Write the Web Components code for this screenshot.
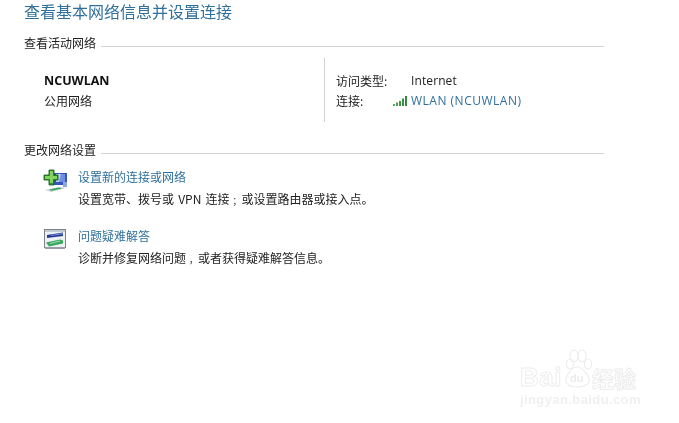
<!DOCTYPE html>
<html lang="zh">
<head>
<meta charset="utf-8">
<title>网络和共享中心</title>
<style>
  html, body { margin: 0; background: #fff; }
  body { width: 679px; height: 423px; overflow: hidden; position: relative; font-family: "Noto Sans CJK SC", "Liberation Sans", sans-serif; }
  net-section.second { margin-top: 19px; }
</style>
</head>
<body>
<net-page>
  <span slot="heading">查看基本网络信息并设置连接</span>
  <net-section label="查看活动网络">
    <active-network></active-network>
  </net-section>
  <net-section label="更改网络设置" class="second">
    <net-task href-text="设置新的连接或网络" desc="设置宽带、拨号或 VPN 连接<span class='mid'>；</span>或设置路由器或接入点。">
      <svg slot="icon" width="26" height="24" viewBox="0 0 26 24">
        <rect x="11" y="4" width="13" height="12" fill="#3556bd"/>
        <rect x="13" y="5" width="9" height="8" fill="#b4cdf2"/>
        <path d="M18 5h4v8h-6z" fill="#6f8fdc"/>
        <rect x="20" y="13" width="4" height="5" fill="#8ea6df"/>
        <path d="M2 21l15-3 6 1-15 4z" fill="#c9d0d6"/>
        <path d="M6 20.500l10-2 3 1-10 2.200z" fill="#36a65a"/>
        <path d="M1 6h5V1h5v5h4v5h-4v5H6v-5H1z" fill="#2f9a2c" stroke="#15541b" stroke-width=".8"/>
        <path d="M7 2h3v5h4v3h-4v4H7v-4H2V7h5z" fill="#82d45f"/>
      </svg>
    </net-task>
    <net-task class="next" href-text="问题疑难解答" desc="诊断并修复网络问题<span class='mid'>，</span>或者获得疑难解答信息。">
      <svg slot="icon" width="24" height="22" viewBox="0 0 24 22">
        <rect x="1.500" y="1.500" width="21" height="18" fill="#eef1f3" stroke="#7d8388"/>
        <rect x="2" y="2" width="20" height="2" fill="#c4ccd2"/>
        <path d="M4 7l16-2.500v3.500l-16 2z" fill="#27378f"/>
        <path d="M8 7l12-2v1.200l-12 1.800z" fill="#6f8ed8"/>
        <path d="M3 14.500l14-3 3 1v3l-14 3z" fill="#36a860"/>
        <path d="M7 15l10-2.500v1l-10 2.500z" fill="#a5e0b8"/>
        <rect x="2" y="19" width="20" height="2" fill="#9aa0a5"/>
      </svg>
    </net-task>
  </net-section>
</net-page>
<baidu-mark></baidu-mark>

<script>
class NetPage extends HTMLElement {
  constructor() {
    super();
    this.attachShadow({ mode: "open" });
    this.shadowRoot.innerHTML = `
      <style>
        :host { display: block; width: 580px; padding: 0 0 0 24px; filter: blur(.3px); }
        h1 { margin: 0; padding-top: 1px; height: 33px; font-weight: 400; font-size: 16px; line-height: 21px; color: #30709c; }
      </style>
      <h1><slot name="heading"></slot></h1>
      <slot></slot>
    `;
  }
}

class NetSection extends HTMLElement {
  constructor() {
    super();
    this.attachShadow({ mode: "open" });
  }
  connectedCallback() {
    this.render();
  }
  render() {
    const label = this.getAttribute("label");
    this.shadowRoot.innerHTML = `
      <style>
        :host { display: block; font-size: 12px; color: #222; }
        .head { display: flex; align-items: center; gap: 5px; height: 18px; line-height: 18px; }
        .head i { flex: 1; height: 1px; background: #d0d3d6; margin-top: 6px; }
      </style>
      <div class="head"><span>${label}</span><i></i></div>
      <slot></slot>
    `;
  }
}

class ActiveNetwork extends HTMLElement {
  constructor() {
    super();
    this.attachShadow({ mode: "open" });
    this.shadowRoot.innerHTML = `
      <style>
        :host { display: flex; height: 64px; margin-top: 6px; font-size: 12px; line-height: 20px; color: #222; }
        .left { width: 280px; padding: 13px 0 0 20px; }
        .left b { display: block; font-family: "Open Sans", "Liberation Sans", sans-serif; font-weight: 700; font-size: 12.5px; color: #111; }
        .right { border-left: 1px solid #cfd2d4; padding: 13px 0 0 11px; display: grid; grid-template-columns: 75px auto; align-content: start; }
        .val { font-family: "Open Sans", "Liberation Sans", sans-serif; letter-spacing: .1px; }
        .link { color: #30709c; margin-left: -18px; display: flex; align-items: center; gap: 3px; letter-spacing: .5px; }
        svg { display: block; }
      </style>
      <div class="left"><b>NCUWLAN</b><span>公用网络</span></div>
      <div class="right">
        <span>访问类型:</span><span class="val">Internet</span>
        <span>连接:</span>
        <span class="val link">
          <svg width="15" height="12" viewBox="0 0 15 12">
            <rect x="0" y="9" width="2" height="2" fill="#5aa55f"/>
            <rect x="3" y="7.500" width="2" height="3.500" fill="#4d9c54"/>
            <rect x="6" y="6" width="2" height="5" fill="#3f9147"/>
            <rect x="9" y="3.500" width="2" height="7.500" fill="#3b8f45"/>
            <rect x="12" y="1" width="2" height="10" fill="#338a3e"/>
          </svg>
          WLAN (NCUWLAN)
        </span>
      </div>
    `;
  }
}

class NetTask extends HTMLElement {
  constructor() {
    super();
    this.attachShadow({ mode: "open" });
  }
  connectedCallback() {
    const link = this.getAttribute("href-text");
    const desc = this.getAttribute("desc");
    this.shadowRoot.innerHTML = `
      <style>
        :host { display: flex; gap: 10px; padding: 7px 0 0 19px; font-size: 12px; line-height: 22px; color: #222; }
        :host(.next) { padding-top: 15px; }
        .icon { width: 25px; padding-top: 3px; }
        a { display: block; color: #30709c; }
        p { margin: 0; word-spacing: 1.500px; }
        .mid { display: inline-block; width: 12px; text-align: right; font-size: 9px; line-height: 1; }
      </style>
      <div class="icon"><slot name="icon"></slot></div>
      <div><a>${link}</a><p>${desc}</p></div>
    `;
  }
}

class BaiduMark extends HTMLElement {
  constructor() {
    super();
    this.attachShadow({ mode: "open" });
    this.shadowRoot.innerHTML = `
      <style>
        :host { position: absolute; left: 520px; top: 349px; width: 125px; height: 62px; color: #f1f1f1; font-family: "Liberation Sans", sans-serif; filter: blur(.4px); }
        .top { display: flex; align-items: flex-end; height: 41px; }
        .bai { font-size: 26px; line-height: 26px; font-weight: 700; color: #fff; -webkit-text-stroke: 1px #eeeeee; letter-spacing: .5px; }
        svg { display: block; margin: 0 0 0 -1px; }
        .cn { font-family: "Noto Sans CJK SC", sans-serif; font-size: 22px; line-height: 26px; font-weight: 700; color: #fff; -webkit-text-stroke: 1px #ececec; margin-left: -1px; white-space: nowrap; }
        .url { font-size: 13px; line-height: 18px; font-weight: 700; color: #f0f0f0; letter-spacing: .4px; margin: 1px 0 0 0; white-space: nowrap; }
      </style>
      <div class="top">
        <span class="bai">Bai</span>
        <svg width="32" height="41" viewBox="0 0 32 41" fill="none" stroke="#ededed" stroke-width="1.200">
          <ellipse cx="9" cy="15" rx="3.500" ry="5"/>
          <ellipse cx="13" cy="7" rx="4" ry="6"/>
          <ellipse cx="21" cy="7" rx="4" ry="6"/>
          <ellipse cx="27" cy="15" rx="3.500" ry="5"/>
          <path d="M16 18c-5 0-11 8-11 13 0 5 5 7 11 7s12-2 12-7c0-5-7-13-12-13z"/>
          <text x="9" y="33" font-size="11" font-family="Liberation Sans" fill="#ececec" stroke="none" font-weight="700">du</text>
        </svg>
        <span class="cn">经验</span>
      </div>
      <div class="url">jingyan.baidu.com</div>
    `;
  }
}

customElements.define("net-page", NetPage);
customElements.define("net-section", NetSection);
customElements.define("active-network", ActiveNetwork);
customElements.define("net-task", NetTask);
customElements.define("baidu-mark", BaiduMark);
</script>
</body>
</html>
